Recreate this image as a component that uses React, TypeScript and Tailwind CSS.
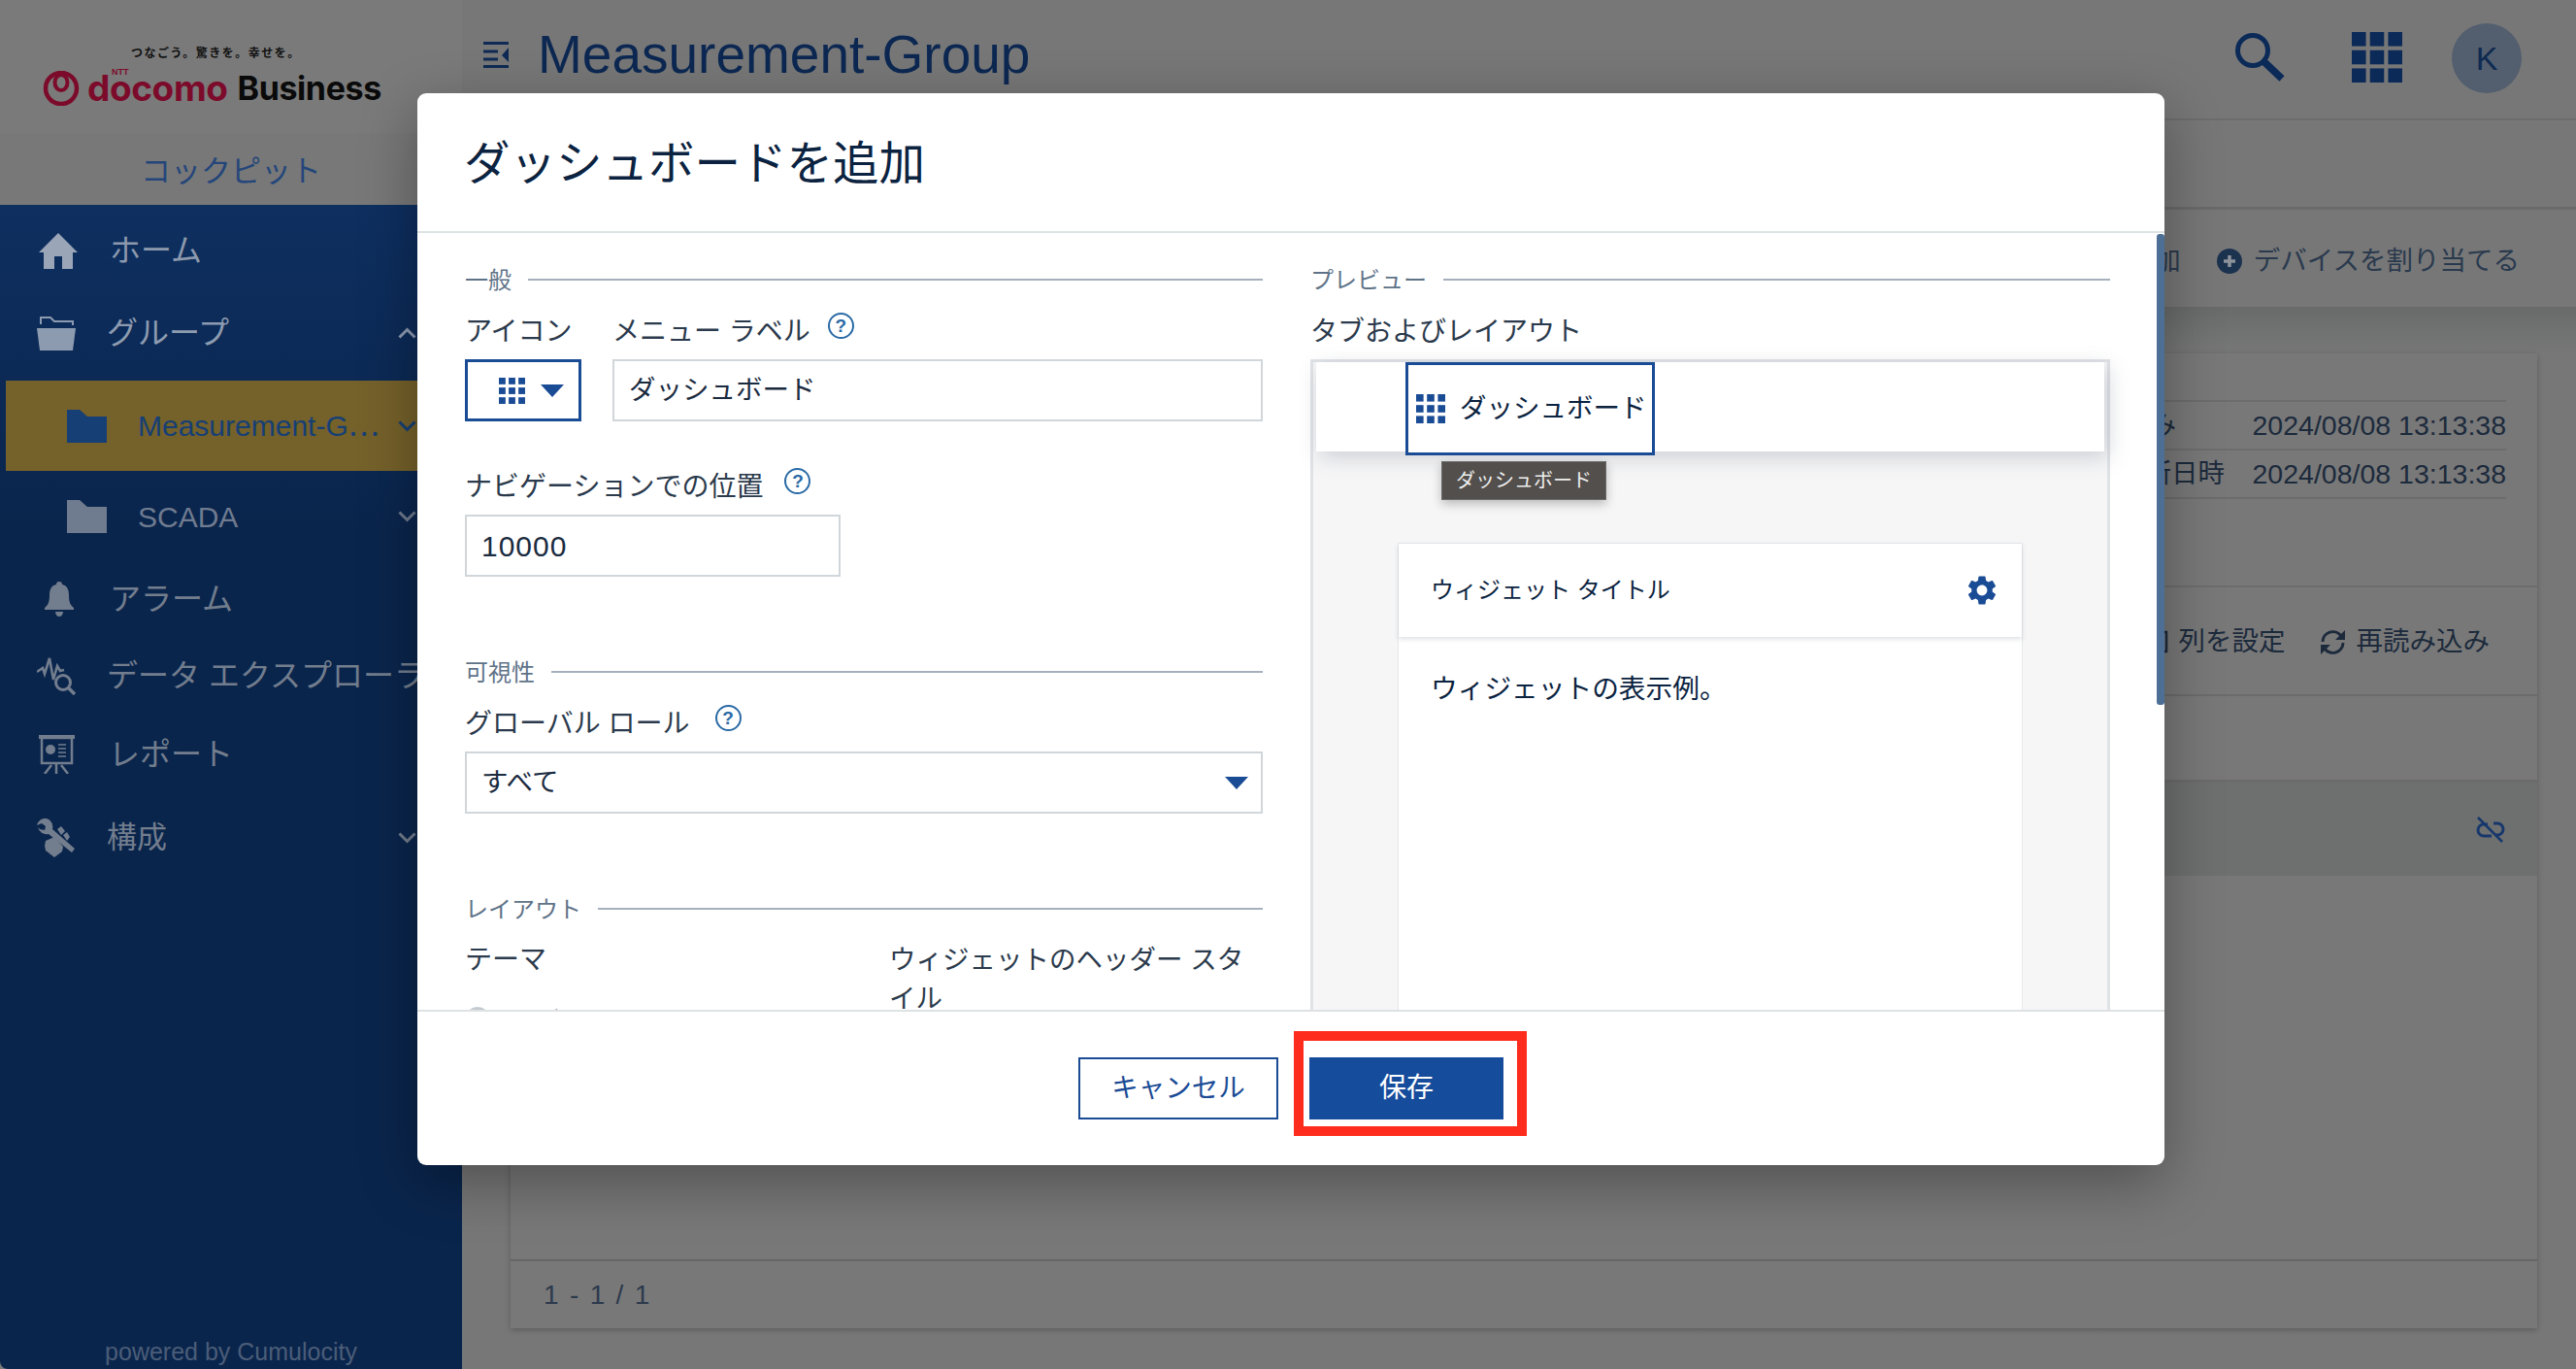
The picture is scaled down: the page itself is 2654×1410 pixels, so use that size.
import { ReactNode } from 'react';
import { MdSettings } from 'react-icons/md';

const blue = '#1a4b95';

function GridIcon({ size, color, gap = 0.12 }: { size: number; color: string; gap?: number }) {
  const cell = (1 - gap * 2) / 3;
  const spots = [0, 1, 2];
  return (
    <svg width={size} height={size} viewBox="0 0 1 1" className="shrink-0">
      {spots.map((row) =>
        spots.map((col) => (
          <rect key={`${row}-${col}`} x={col * (cell + gap)} y={row * (cell + gap)} width={cell} height={cell} fill={color} />
        ))
      )}
    </svg>
  );
}

function Caret() {
  return (
    <svg width="24" height="13" viewBox="0 0 24 13" className="shrink-0">
      <polygon points="0,0 24,0 12,13" fill={blue} />
    </svg>
  );
}

function Chevron({ up, color }: { up?: boolean; color: string }) {
  return (
    <svg width="19" height="12" viewBox="0 0 19 12" className="shrink-0">
      <polyline points={up ? '1.5,10.5 9.5,2.5 17.5,10.5' : '1.5,1.5 9.5,9.5 17.5,1.5'} fill="none" stroke={color} strokeWidth="3" />
    </svg>
  );
}

function Help({ gap = 'ml-[18px]' }: { gap?: string }) {
  return (
    <span className={`flex h-[27px] w-[27px] shrink-0 items-center justify-center self-start rounded-full border-2 border-[#2a6aa5] text-[19px] font-bold leading-none text-[#2a6aa5] ${gap}`}>
      ?
    </span>
  );
}

function SectionTitle({ label }: { label: string }) {
  return (
    <div className="flex h-[36px] items-center gap-[17px]">
      <span className="pt-[2px] text-[24px] text-[#5f7388]">{label}</span>
      <div className="h-[2px] flex-1 bg-[#a5b0bc]" />
    </div>
  );
}

function FieldLabel({ children }: { children: ReactNode }) {
  return <div className="flex h-[40px] items-center text-[28px] text-[#2b3a4c]">{children}</div>;
}

function Box({ className, children }: { className: string; children: ReactNode }) {
  return (
    <div className={`flex h-[64px] items-center border-2 border-[#d0d6da] pl-[15px] text-[27.5px] text-[#1b2b3f] ${className}`}>
      {children}
    </div>
  );
}

function NavRow({
  icon,
  label,
  height,
  slot = 'w-[110px] pl-[38px]',
  color = '#727d8d',
  right,
  className = '',
  textClass = 'text-[32px]'
}: {
  icon: ReactNode;
  label: string;
  height: string;
  slot?: string;
  color?: string;
  right?: ReactNode;
  className?: string;
  textClass?: string;
}) {
  return (
    <div className={`flex shrink-0 items-center whitespace-nowrap ${height} ${className}`} style={{ color }}>
      <div className={`flex shrink-0 items-center ${slot}`}>{icon}</div>
      <span className={textClass}>{label}</span>
      {right && <div className="absolute left-[410px]">{right}</div>}
    </div>
  );
}

function Logo() {
  return (
    <div className="flex h-[137px] flex-col pl-[44px] pt-[43px]">
      <div className="ml-[91px] whitespace-nowrap text-[12px] font-bold leading-[24px] tracking-[1.5px] text-[#111]">
        つなごう。驚きを。幸せを。
      </div>
      <div className="relative mt-[6px] flex items-center">
        <svg width="38" height="36" viewBox="0 0 38 36" className="shrink-0">
          <circle cx="19" cy="18" r="16" fill="none" stroke="#7c0b2b" strokeWidth="4.5" />
          <ellipse cx="19" cy="12" rx="6.5" ry="8" fill="none" stroke="#7c0b2b" strokeWidth="4" />
        </svg>
        <span className="ml-[8px] font-['Inter'] text-[37px] font-bold leading-[36px] tracking-[-0.4px] text-[#7c0b2b]">docomo</span>
        <span className="ml-[10px] font-['Inter'] text-[34px] font-bold leading-[36px] tracking-[-0.4px] text-[#0a0a0a]">Business</span>
        <span className="absolute left-[71px] top-[-3px] text-[9px] font-bold leading-none text-[#7c0b2b]">NTT</span>
      </div>
    </div>
  );
}

function Sidebar() {
  return (
    <aside className="relative flex h-[1410px] w-[476px] shrink-0 flex-col overflow-hidden bg-[#7a7a7a]">
      <Logo />
      <div className="flex h-[74px] items-center justify-center bg-[#787878] pt-[6px] text-[31px] text-[#24467a]">コックピット</div>
      <nav className="relative flex flex-1 flex-col rounded-bl-[8px] bg-linear-to-b from-[#0e2f60] to-[#0a254c] to-[28%]">
        <NavRow
          height="h-[94px]"
          color="#8c99ad"
          label="ホーム"
          textClass="ml-[3px] text-[32px]"
          icon={
            <svg width="40" height="37" viewBox="0 0 40 37" className="ml-[2px]">
              <path d="M20 0 40 20H35V37H24V24H16V37H5V20H0Z" fill="#9aa6b8" />
            </svg>
          }
        />
        <NavRow
          height="h-[76px]"
          color="#8d9bb0"
          label="グループ"
          right={<Chevron up color="#8d9bb0" />}
          icon={
            <svg width="40" height="35" viewBox="0 0 40 35">
              <path d="M4 8V1H14L18 5H37V9" fill="none" stroke="#8d9bb0" strokeWidth="2" />
              <path d="M0 12H40L37 35H3Z" fill="#8d9bb0" />
            </svg>
          }
        />
        <NavRow
          height="h-[93px]"
          color="#163f75"
          className="ml-[6px] mt-[11px] bg-[#75612a]"
          slot="w-[136px] pl-[63px]"
          label="Measurement-G⋯"
          textClass="text-[30px]"
          icon={
            <svg width="41" height="34" viewBox="0 0 41 34">
              <path d="M0 0H13L21 7H41V34H0Z" fill="#163f75" />
            </svg>
          }
          right={<Chevron color="#163f75" />}
        />
        <NavRow
          height="h-[94px]"
          slot="w-[142px] pl-[69px]"
          color="#6f7b8f"
          label="SCADA"
          textClass="text-[30px]"
          right={<Chevron color="#6f7b8f" />}
          icon={
            <svg width="41" height="34" viewBox="0 0 41 34">
              <path d="M0 0H13L21 7H41V34H0Z" fill="#6f7b8f" />
            </svg>
          }
        />
        <NavRow
          height="h-[76px]"
          label="アラーム"
          textClass="ml-[3px] text-[32px]"
          icon={
            <svg width="30" height="36" viewBox="0 0 30 36" className="ml-[8px]">
              <path d="M15 0c2 0 3 1 3 3 5 1 7 5 7 11 0 6 1 10 5 13v2H0v-2c4-3 5-7 5-13 0-6 2-10 7-11 0-2 1-3 3-3Z" fill="#727d8d" />
              <path d="M11 31h8c0 3-2 5-4 5s-4-2-4-5Z" fill="#727d8d" />
            </svg>
          }
        />
        <NavRow
          height="h-[82px]"
          label="データ エクスプローラー"
          icon={
            <svg width="40" height="39" viewBox="0 0 40 39">
              <polyline points="0,15 6,11 8,17 13,1 17,23 21,9 24,14 28,13" fill="none" stroke="#727d8d" strokeWidth="2.6" />
              <circle cx="27" cy="26" r="7.5" fill="none" stroke="#727d8d" strokeWidth="3" />
              <line x1="32.5" y1="31.5" x2="39" y2="38" stroke="#727d8d" strokeWidth="3.5" />
            </svg>
          }
        />
        <NavRow
          height="h-[80px]"
          label="レポート"
          textClass="ml-[2px] text-[32px]"
          icon={
            <svg width="38" height="40" viewBox="0 0 38 40" className="ml-[2px]">
              <rect x="0" y="0" width="37" height="4" fill="#727d8d" />
              <rect x="3" y="3" width="31" height="26" fill="none" stroke="#727d8d" strokeWidth="2.5" />
              <circle cx="12" cy="15" r="5" fill="#727d8d" />
              <path d="M20 10h8M20 14h8M20 18h8M20 22h8" stroke="#727d8d" strokeWidth="1.6" />
              <path d="M18 30v10M13 31 6 40M23 31l7 9" stroke="#727d8d" strokeWidth="2.5" />
            </svg>
          }
        />
        <NavRow
          height="h-[92px]"
          label="構成"
          textClass="text-[31px]"
          right={<Chevron color="#727d8d" />}
          icon={
            <svg width="40" height="40" viewBox="0 0 40 40">
              <path d="M10 0A9 9 0 0 0 0 7L5 5 9 8 8 12 3 11 1 9A9 9 0 0 0 12 16L36 35 39 31 16 11A9 9 0 0 0 10 0Z" fill="#727d8d" />
              <path d="M9 23 18 19 27 29 26 34 18 40 9 33 8 28Z" fill="#727d8d" />
              <path d="M21 11 25 8 29 13 25 17ZM27 17 31 14 34 19 31 23Z" fill="#727d8d" />
            </svg>
          }
        />
        <div className="mt-auto flex h-[34px] items-center justify-center text-[25px] text-[#4b5d78]">powered by Cumulocity</div>
      </nav>
    </aside>
  );
}

function InfoRow({ label, labelClass = '' }: { label: string; labelClass?: string }) {
  return (
    <div className="flex h-[50px] items-center justify-between border-t-2 border-[#6c6c6c]">
      <span className={labelClass}>{label}</span>
      <span className="text-[28.5px]">2024/08/08 13:13:38</span>
    </div>
  );
}

function Main() {
  return (
    <main className="flex h-[1410px] min-w-0 flex-1 flex-col">
      <header className="flex h-[124px] shrink-0 items-center border-b-2 border-[#6c6c6c] pb-[2px] pl-[22px] pr-[56px]">
        <svg width="26" height="27" viewBox="0 0 26 27" className="mb-[7px] shrink-0">
          <path d="M0 1.5H26M0 10H15M0 18H15M0 25.500H26" stroke="#0f2a54" strokeWidth="3" fill="none" />
          <path d="M26 6 19 14 26 21Z" fill="#0f2a54" />
        </svg>
        <h1 className="mb-[8px] ml-[30px] text-[55px] leading-none text-[#0c2852]">Measurement-Group</h1>
        <svg width="52" height="52" viewBox="0 0 52 52" className="mb-[3px] ml-auto shrink-0">
          <circle cx="19" cy="19" r="15.500" fill="none" stroke="#0b2a58" strokeWidth="5" />
          <line x1="30" y1="30" x2="49" y2="48" stroke="#0b2a58" strokeWidth="7.500" />
        </svg>
        <div className="mb-[3px] ml-[69px]">
          <GridIcon size={52} color="#0b2a58" gap={0.08} />
        </div>
        <div className="ml-[51px] flex h-[72px] w-[72px] shrink-0 items-center justify-center rounded-full bg-[#535e6e] text-[34px] text-[#0f2a50]">K</div>
      </header>
      <div className="h-[92px] shrink-0 border-b-[3px] border-[#6a6a6a]" />
      <div className="flex h-[100px] shrink-0 items-center justify-end gap-[37px] pr-[58px] pt-[5px] text-[27.5px] text-[#2a3a4e]">
        <span>追加</span>
        <div className="flex items-center gap-[12px]">
          <svg width="26" height="26" viewBox="0 0 26 26" className="shrink-0">
            <circle cx="13" cy="13" r="13" fill="#1c3350" />
            <path d="M13 7v12M7 13h12" stroke="#8d939b" strokeWidth="3.500" />
          </svg>
          <span>デバイスを割り当てる</span>
        </div>
      </div>
      <div className="flex flex-1 flex-col bg-linear-to-b from-[#696b6b] to-[#777777] to-[48px] pl-[50px] pr-[40px] pt-[48px]">
        <section className="flex h-[1004px] flex-col bg-[#787878] text-[#1c2a3c] shadow-[0_2px_6px_rgba(0,0,0,0.22)]">
          <div className="flex h-[239px] shrink-0 justify-end pr-[32px] pt-[48px] text-[27.5px]">
            <div className="h-fit w-[455px] border-b-2 border-[#6c6c6c]">
              <InfoRow label="作成済み" labelClass="pl-[5px]" />
              <InfoRow label="最終更新日時" />
            </div>
          </div>
          <div className="flex h-[112px] shrink-0 items-center justify-end gap-[35px] border-t-2 border-[#6c6c6c] pr-[49px] pt-[2px] text-[27.5px]">
            <div className="flex items-center gap-[11px]">
              <svg width="24" height="24" viewBox="0 0 24 24" className="shrink-0">
                <rect x="2" y="2" width="20" height="20" fill="none" stroke="#1c2a3c" strokeWidth="2.500" />
              </svg>
              <span>列を設定</span>
            </div>
            <div className="flex items-center gap-[11px]">
              <svg width="27" height="27" viewBox="0 0 27 27" className="shrink-0">
                <path d="M3 13A10.500 10.500 0 0 1 22 7M24 14A10.500 10.500 0 0 1 5 20" fill="none" stroke="#1c2a3c" strokeWidth="3" />
                <path d="M26 1v10H16ZM1 26V16H11Z" fill="#1c2a3c" />
              </svg>
              <span>再読み込み</span>
            </div>
          </div>
          <div className="h-[91px] shrink-0 border-t-2 border-b-[3px] border-[#6b6b6b]" />
          <div className="flex h-[96px] shrink-0 items-center justify-end bg-[#6e6f6f] pr-[33px]">
            <svg width="30" height="27" viewBox="0 0 30 27">
              <path d="M12 8H8a6 6 0 0 0 0 12h8M18 7h4a6 6 0 0 1 0 12h-2" fill="none" stroke="#17386c" strokeWidth="3" />
              <line x1="2" y1="1" x2="27" y2="26" stroke="#17386c" strokeWidth="2.500" />
            </svg>
          </div>
          <div className="flex-1" />
          <div className="flex h-[71px] shrink-0 items-center border-t-2 border-[#666] pl-[34px] text-[28px] tracking-[1.8px] text-[#2d3a4d]">1 - 1 / 1</div>
        </section>
      </div>
    </main>
  );
}

function Modal() {
  return (
    <div className="absolute left-[430px] top-[96px] flex h-[1104px] w-[1800px] flex-col rounded-[9px] bg-white text-[#1b2b3f] shadow-[0_18px_60px_rgba(0,0,0,0.33)]">
      <div className="flex h-[144px] shrink-0 items-center border-b-2 border-[#dde2e4] pl-[48px] pt-[4px] text-[47.5px] text-[#0b2340]">
        ダッシュボードを追加
      </div>
      <div className="relative flex h-[800px] shrink-0 gap-[49px] overflow-hidden pl-[49px]">
        <div className="w-[822px] shrink-0 pt-[30px]">
          <SectionTitle label="一般" />
          <div className="mt-[16px] flex gap-[32px]">
            <div>
              <FieldLabel>アイコン</FieldLabel>
              <div className="mt-[8px] flex h-[64px] w-[120px] items-center gap-[16px] border-[3px] border-[#1a4b95] pl-[32px]">
                <GridIcon size={27} color={blue} />
                <Caret />
              </div>
            </div>
            <div className="flex-1">
              <FieldLabel>
                メニュー ラベル
                <Help />
              </FieldLabel>
              <Box className="mt-[8px]">ダッシュボード</Box>
            </div>
          </div>
          <div className="mt-[48px]">
            <FieldLabel>
              ナビゲーションでの位置
              <Help gap="ml-[22px]" />
            </FieldLabel>
            <Box className="mt-[8px] w-[387px] text-[30px] tracking-[1px]">10000</Box>
          </div>
          <div className="mt-[80px]">
            <SectionTitle label="可視性" />
          </div>
          <div className="mt-[16px]">
            <FieldLabel>
              グローバル ロール
              <Help gap="ml-[26px]" />
            </FieldLabel>
            <Box className="mt-[8px] justify-between pr-[13px]">
              すべて
              <Caret />
            </Box>
          </div>
          <div className="mt-[80px]">
            <SectionTitle label="レイアウト" />
          </div>
          <div className="mt-[15px] flex">
            <div className="w-[437px] shrink-0">
              <FieldLabel>テーマ</FieldLabel>
              <div className="mt-[28px] flex items-start gap-[44px] text-[27.5px] leading-none">
                <div className="h-[26px] w-[26px] shrink-0 rounded-full border-[3px] border-[#c4cad0]" />
                <span className="mt-[3px]">デフォルト</span>
              </div>
            </div>
            <div className="flex-1 text-[27.5px] leading-[40px] text-[#2b3a4c]">ウィジェットのヘッダー スタイル</div>
          </div>
        </div>
        <div className="w-[824px] shrink-0 pt-[30px]">
          <SectionTitle label="プレビュー" />
          <div className="mt-[16px]">
            <FieldLabel>タブおよびレイアウト</FieldLabel>
          </div>
          <div className="relative mt-[8px] h-[700px] border-[3px] border-[#e0e3e6] bg-[#f6f6f7]">
            <div className="mx-[3px] h-[92px] bg-white pl-[92px] shadow-[4px_6px_20px_rgba(110,120,140,0.3)]">
              <div className="flex h-[96px] w-[257px] items-center gap-[15px] border-[3px] border-[#1a4b95] bg-white pl-[8px] text-[27.5px] text-[#0b2340]">
                <GridIcon size={30} color={blue} />
                <span className="whitespace-nowrap">ダッシュボード</span>
              </div>
            </div>
            <div className="absolute left-[132px] top-[102px] flex h-[40px] w-[170px] items-center justify-center border border-[#6b6b6b] bg-[#534f4c] text-[20px] text-[#eeeeee] shadow-[0_4px_10px_rgba(0,0,0,0.25)]">
              ダッシュボード
            </div>
            <div className="mx-[87px] mt-[94px] h-[500px] border border-[#e6e8ea] bg-white">
              <div className="flex h-[96px] items-center justify-between pl-[33px] pr-[23px] text-[24px] text-[#0b2340] shadow-[0_2px_5px_rgba(100,110,120,0.22)]">
                ウィジェット タイトル
                <MdSettings size={36} color={blue} />
              </div>
              <div className="pl-[33px] pt-[34px] text-[27.7px] leading-[40px] text-[#0b2340]">ウィジェットの表示例。</div>
            </div>
          </div>
        </div>
        <div className="absolute right-0 top-[1px] h-[485px] w-[8px] rounded-[3px] bg-[#4d6f96]" />
      </div>
      <div className="flex flex-1 items-center justify-center gap-[32px] border-t-2 border-[#dde2e4]">
        <button className="h-[64px] w-[206px] border-2 border-[#1a4b95] text-[27.5px] text-[#1a4b95]">キャンセル</button>
        <button className="h-[64px] w-[200px] bg-[#164c9c] text-[28px] text-white">保存</button>
      </div>
      <div className="absolute left-[903px] top-[966px] h-[108px] w-[240px] border-[10px] border-[#fe2c1c]" />
    </div>
  );
}

export default function App() {
  return (
    <div className="relative flex h-[1410px] w-[2654px] overflow-hidden bg-[#777777] font-['Liberation_Sans','Noto_Sans_CJK_JP',sans-serif]">
      <Sidebar />
      <Main />
      <Modal />
    </div>
  );
}
